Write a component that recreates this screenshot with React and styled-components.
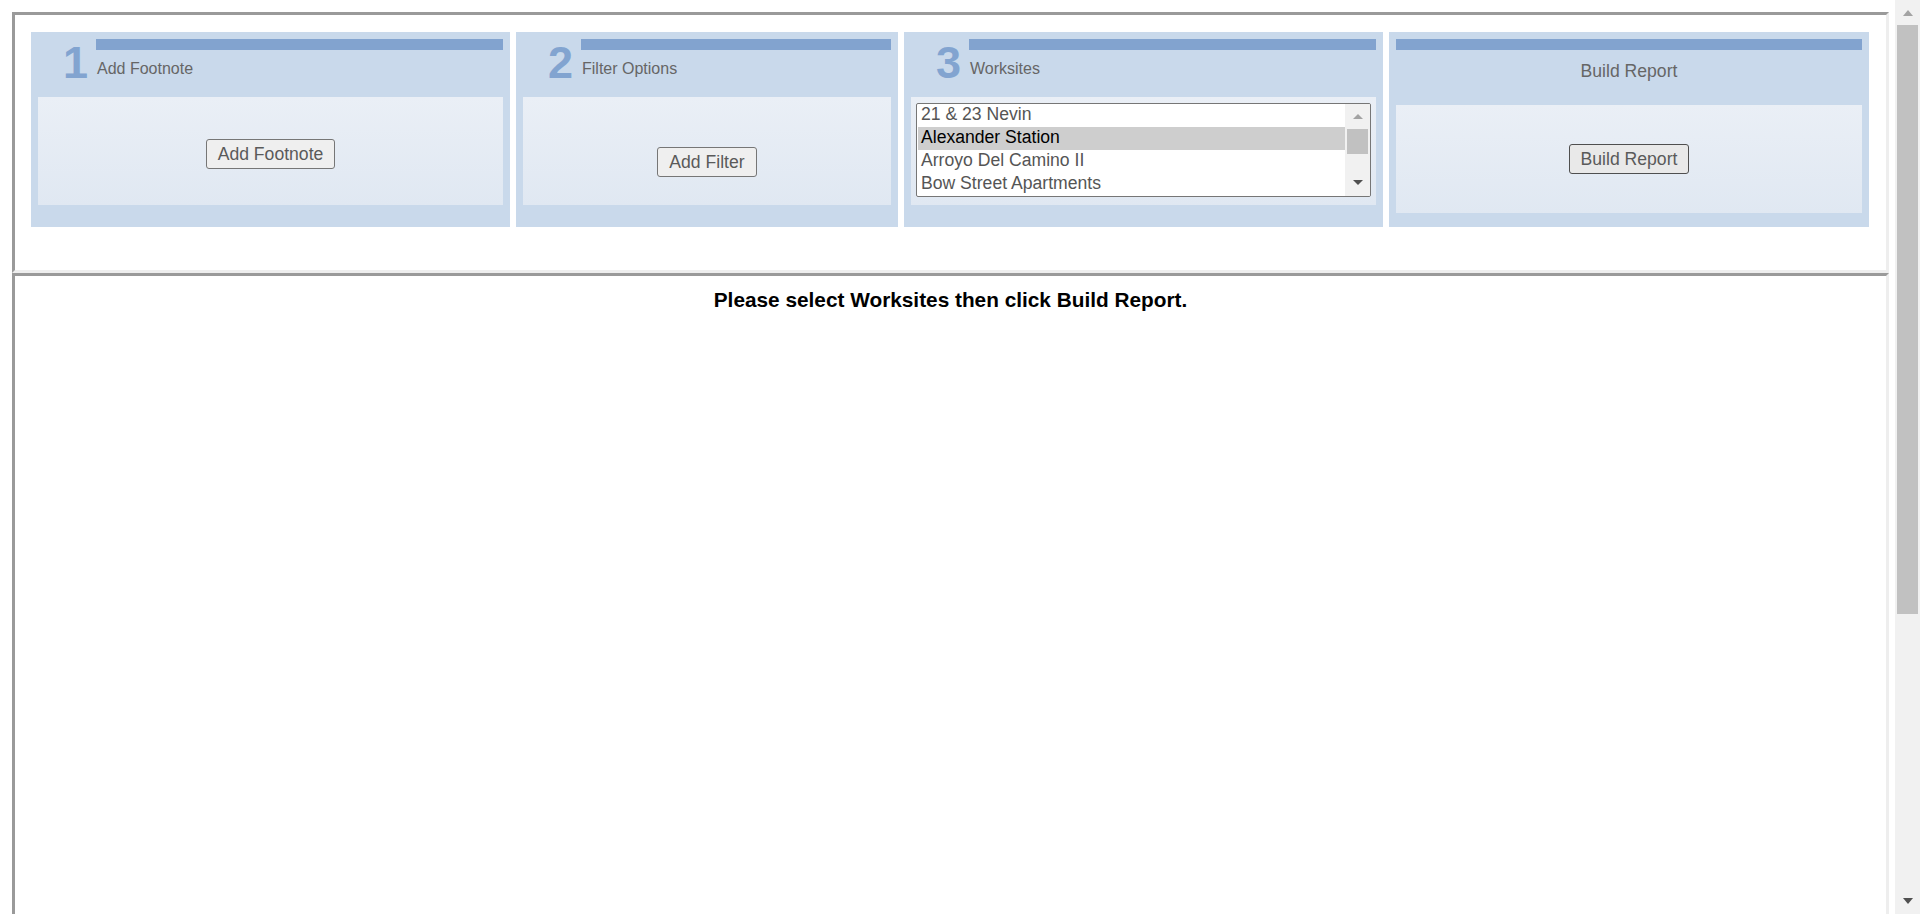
import React from "react";
import styled, { createGlobalStyle } from "styled-components";

const GlobalStyle = createGlobalStyle`
  html, body {
    margin: 0;
    padding: 0;
    overflow: hidden;
  }
  body {
    font-family: "Liberation Sans", Arial, sans-serif;
    background: #ffffff;
  }
`;

const Viewport = styled.div`
  display: flex;
  height: 100vh;
  overflow: hidden;
`;

const Page = styled.div`
  flex: 1;
  min-width: 0;
  display: flex;
  flex-direction: column;
  padding: 12px 6px 0 12px;
  overflow: hidden;
`;

const Frame = styled.div`
  flex-shrink: 0;
  box-sizing: border-box;
  border: 3px solid;
  border-color: #9a9a9a #eeeeee #eeeeee #9a9a9a;
  height: ${(p) => p.$height}px;
  padding: ${(p) => p.$padding};
`;

const Steps = styled.div`
  display: flex;
  gap: 6px;
  height: 195px;
`;

const Panel = styled.div`
  flex: 0 0 ${(p) => p.$width}px;
  box-sizing: border-box;
  display: flex;
  flex-direction: column;
  padding: 7px;
  background: #c9d9eb;
`;

const StepHeader = styled.div`
  display: grid;
  grid-template-columns: 58px 1fr;
  grid-template-rows: 11px 1fr;
  height: 58px;
`;

const StepNumber = styled.div`
  grid-row: 1 / span 2;
  box-sizing: border-box;
  padding: 1px 8px 0 0;
  text-align: right;
  font-size: 45px;
  line-height: 45px;
  font-weight: bold;
  color: #82a4d0;
`;

const Bar = styled.div`
  height: 11px;
  background: #82a3cf;
`;

const StepTitle = styled.div`
  margin-top: 10px;
  padding-left: 1px;
  font-size: 16px;
  color: #666666;
`;

const CenterHeader = styled.div`
  display: flex;
  flex-direction: column;
  height: 66px;
`;

const CenterTitle = styled.div`
  margin-top: 11px;
  text-align: center;
  font-size: 17.6px;
  color: #666666;
`;

const Body = styled.div`
  box-sizing: border-box;
  height: 108px;
  display: flex;
  justify-content: center;
  align-items: flex-start;
  padding: ${(p) => p.$padding};
  background: linear-gradient(#eaeff6, #e0e8f2);
`;

const Button = styled.button`
  box-sizing: border-box;
  height: 30px;
  padding: 0 11px;
  font-family: "Liberation Sans", Arial, sans-serif;
  font-size: 17.6px;
  color: #5a5a5a;
  background: ${(p) => (p.$active ? "#e9e9e9" : "#efefef")};
  border: 1px solid ${(p) => (p.$active ? "#4f4f4f" : "#767676")};
  border-radius: 3px;
  cursor: pointer;
`;

const ListBox = styled.div`
  flex: 1;
  box-sizing: border-box;
  height: 94px;
  display: flex;
  border: 1px solid #767676;
  border-radius: 2px;
  background: #ffffff;
  overflow: hidden;
`;

const OptionList = styled.div`
  flex: 1;
  padding-left: 1px;
`;

const Option = styled.div`
  box-sizing: border-box;
  height: 23px;
  padding: 0 3px 3px;
  line-height: 20px;
  font-size: 17.6px;
  white-space: nowrap;
  color: ${(p) => (p.$selected ? "#000000" : "#555555")};
  background: ${(p) => (p.$selected ? "#cecece" : "transparent")};
`;

const ScrollTrack = styled.div`
  flex: 0 0 ${(p) => p.$width}px;
  display: flex;
  flex-direction: column;
  background: #f1f1f1;
`;

const ScrollButton = styled.div`
  flex: 0 0 ${(p) => p.$height}px;
  display: flex;
  align-items: center;
  justify-content: center;
`;

const Arrow = styled.span`
  width: 0;
  height: 0;
  border-left: ${(p) => p.$size}px solid transparent;
  border-right: ${(p) => p.$size}px solid transparent;
  ${(p) => (p.$down ? "border-top" : "border-bottom")}: ${(p) => p.$tall}px solid
    ${(p) => (p.$down ? "#505050" : "#a3a3a3")};
`;

const Thumb = styled.div`
  flex: 0 0 ${(p) => p.$height}px;
  margin: 0 2px;
  background: #c1c1c1;
`;

const Spacer = styled.div`
  flex: 1;
`;

const Message = styled.h3`
  margin: 0;
  text-align: center;
  font-size: 20.8px;
  font-weight: bold;
  color: #000000;
`;

const worksites = [
  "21 & 23 Nevin",
  "Alexander Station",
  "Arroyo Del Camino II",
  "Bow Street Apartments",
];

const Scrollbar = ({ width, up, thumb, down, size, tall }) => (
  <ScrollTrack $width={width}>
    <ScrollButton $height={up}>
      <Arrow $size={size} $tall={tall} />
    </ScrollButton>
    <Thumb $height={thumb} />
    <Spacer />
    <ScrollButton $height={down}>
      <Arrow $down $size={size} $tall={tall} />
    </ScrollButton>
  </ScrollTrack>
);

const App = () => {
  return (
    <>
      <GlobalStyle />
      <Viewport>
        <Page>
          <Frame $height={261} $padding="17px 16px">
            <Steps>
              <Panel $width={479}>
                <StepHeader>
                  <StepNumber>1</StepNumber>
                  <Bar />
                  <StepTitle>Add Footnote</StepTitle>
                </StepHeader>
                <Body $padding="42px 0 0">
                  <Button>Add Footnote</Button>
                </Body>
              </Panel>

              <Panel $width={382}>
                <StepHeader>
                  <StepNumber>2</StepNumber>
                  <Bar />
                  <StepTitle>Filter Options</StepTitle>
                </StepHeader>
                <Body $padding="50px 0 0">
                  <Button>Add Filter</Button>
                </Body>
              </Panel>

              <Panel $width={479}>
                <StepHeader>
                  <StepNumber>3</StepNumber>
                  <Bar />
                  <StepTitle>Worksites</StepTitle>
                </StepHeader>
                <Body $padding="6px 5px 0 5px">
                  <ListBox role="listbox">
                    <OptionList>
                      {worksites.map((site, i) => (
                        <Option key={site} $selected={i === 1}>
                          {site}
                        </Option>
                      ))}
                    </OptionList>
                    <Scrollbar width={25} up={25} thumb={25} down={27} size={5} tall={5} />
                  </ListBox>
                </Body>
              </Panel>

              <Panel $width={480}>
                <CenterHeader>
                  <Bar />
                  <CenterTitle>Build Report</CenterTitle>
                </CenterHeader>
                <Body $padding="39px 0 0">
                  <Button $active>Build Report</Button>
                </Body>
              </Panel>
            </Steps>
          </Frame>

          <Frame $height={700} $padding="12px 0 0">
            <Message>Please select Worksites then click Build Report.</Message>
          </Frame>
        </Page>
        <Scrollbar width={25} up={25} thumb={589} down={26} size={5.5} tall={6} />
      </Viewport>
    </>
  );
};

export default App;
